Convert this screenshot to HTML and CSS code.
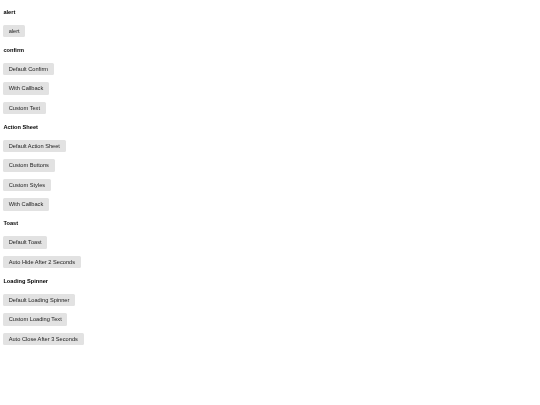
FILE: index.html
```html
<!DOCTYPE html>
<html>
<head>
	<title>Dialogs</title>
	<link rel="stylesheet" href="styles.css">
</head>
<body>
	<h4>alert</h4>
	<button>alert</button>

	<h4>confirm</h4>
	<button>Default Confirm</button>
	<button>With Callback</button>
	<button>Custom Text</button>

	<h4>Action Sheet</h4>
	<button>Default Action Sheet</button>
	<button>Custom Buttons</button>
	<button>Custom Styles</button>
	<button>With Callback</button>

	<h4>Toast</h4>
	<button>Default Toast</button>
	<button>Auto Hide After 2 Seconds</button>

	<h4>Loading Spinner</h4>
	<button>Default Loading Spinner</button>
	<button>Custom Loading Text</button>
	<button>Auto Close After 3 Seconds</button>
</body>
</html>
```
FILE: styles.css
```css
* {
	margin: 0;
}
body {
	padding: 8.7px 3px 0;
	font-family: "Liberation Sans", Arial, sans-serif;
	filter: blur(.4px);
}
h4 {
	height: 6.5px;
	margin-top: 9.5px;
	margin-bottom: 9.5px;
	padding-left: .4px;
	font-size: 5.67px;
	line-height: 6.5px;
	font-weight: bold;
	color: #000;
}
h4:first-child {
	margin-top: 0;
}
button {
	display: block;
	height: 12.5px;
	margin-top: 7px;
	padding: 0 5.7px;
	border: 0;
	border-radius: 1.5px;
	background: #e2e2e2;
	font-family: inherit;
	font-size: 5.67px;
	line-height: 12.5px;
	color: #222;
}
h4 + button {
	margin-top: 0;
}
```
